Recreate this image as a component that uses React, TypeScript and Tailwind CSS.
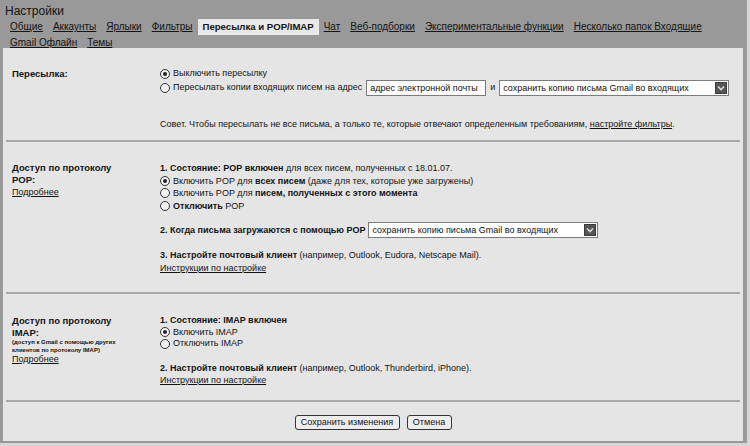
import { ReactNode } from "react"

const tabs = [
  "Общие",
  "Аккаунты",
  "Ярлыки",
  "Фильтры",
  "Пересылка и POP/IMAP",
  "Чат",
  "Веб-подборки",
  "Экспериментальные функции",
  "Несколько папок Входящие",
  "Gmail Офлайн",
  "Темы",
]

function Radio({ checked }: { checked?: boolean }) {
  return (
    <span className="inline-flex items-center justify-center w-[10px] h-[10px] rounded-full border border-[#333] bg-[#f2f2f2] mr-[3px] shrink-0">
      {checked && <span className="w-[4px] h-[4px] rounded-full bg-[#222]" />}
    </span>
  )
}

function Select({ className }: { className: string }) {
  return (
    <div className={`flex items-center h-[16px] bg-white border border-[#7c7c7c] pl-[3px] pr-[1px] ${className}`}>
      <span className="flex-1 text-[9px] leading-[14px]">сохранить копию письма Gmail во входящих</span>
      <span className="flex items-center justify-center w-[12px] h-[12px] bg-[#555] border border-[#3c3c3c]">
        <svg width="8" height="6" viewBox="0 0 8 6">
          <path d="M1 1.5 L4 4.5 L7 1.5" stroke="#d8d8d8" strokeWidth="1.6" fill="none" />
        </svg>
      </span>
    </div>
  )
}

function Line({ children, className = "" }: { children: ReactNode; className?: string }) {
  return <div className={`flex items-center ${className}`}>{children}</div>
}

function Divider() {
  return <div className="h-[2px] bg-[#a8a8a8] mx-[3px]" />
}

export default function App() {
  return (
    <div className="w-[750px] h-[446px] bg-[#d6d6d6] font-['Liberation_Sans',Arial,sans-serif] text-[#141414]">
      <div className="w-[747px] h-[443px] bg-[#999999] flex flex-col">
        <div className="text-[12px] leading-[16px] pl-[5px] pt-[3px]">Настройки</div>
        <div className="flex flex-wrap pl-[5px] pr-[30px] text-[10px]">
          {tabs.map((t) => {
            const active = t === "Пересылка и POP/IMAP"
            return (
              <span
                key={t}
                className={
                  active
                    ? "px-[5px] h-[16px] leading-[16px] bg-[#e8e8e8] font-bold text-[9.6px]"
                    : "px-[5px] h-[15px] leading-[16px] underline"
                }
              >
                {t}
              </span>
            )
          })}
        </div>
        <div className="flex-1 ml-[3px] w-[740px] mb-[2px] mt-[-2px] bg-[#e5e5e5] flex flex-col">
          {/* Пересылка */}
          <div className="grid grid-cols-[148px_1fr] pl-[9px] pt-[19px] pb-[9px]">
            <div className="text-[9.5px] leading-[13px] font-bold">Пересылка:</div>
            <div className="text-[9px]">
              <Line className="h-[13px]">
                <Radio checked />
                Выключить пересылку
              </Line>
              <Line className="h-[16px]">
                <Radio />
                Пересылать копии входящих писем на адрес
                <div className="ml-[4px] w-[120px] h-[16px] bg-white border border-[#7c7c7c] pl-[3px] leading-[14px]">
                  адрес электронной почты
                </div>
                <span className="mx-[4px]">и</span>
                <Select className="w-[230px]" />
              </Line>
              <div className="mt-[22px] leading-[13px]">
                Совет. Чтобы пересылать не все письма, а только те, которые отвечают определенным
                требованиям, <span className="underline">настройте фильтры</span>.
              </div>
            </div>
          </div>
          <Divider />

          {/* POP */}
          <div className="grid grid-cols-[148px_1fr] pl-[9px] pt-[20px] pb-[18px]">
            <div className="text-[9.5px] leading-[12px]">
              <div className="font-bold">Доступ по протоколу</div>
              <div className="font-bold">POP:</div>
              <div className="underline text-[9px]">Подробнее</div>
            </div>
            <div className="text-[9px] leading-[12.5px]">
              <div>
                <b>1. Состояние: POP включен</b> для всех писем, полученных с 18.01.07.
              </div>
              <Line>
                <Radio checked />
                <span>
                  Включить POP для <b>всех писем</b> (даже для тех, которые уже загружены)
                </span>
              </Line>
              <Line>
                <Radio />
                <span>
                  Включить POP для <b>писем, полученных с этого момента</b>
                </span>
              </Line>
              <Line>
                <Radio />
                <span>
                  <b>Отключить</b> POP
                </span>
              </Line>
              <Line className="mt-[10px]">
                <b className="mr-[3px]">2. Когда письма загружаются с помощью POP</b>
                <Select className="w-[230px]" />
              </Line>
              <div className="mt-[11px]">
                <b>3. Настройте почтовый клиент</b> (например, Outlook, Eudora, Netscape Mail).
              </div>
              <div className="underline">Инструкции по настройке</div>
            </div>
          </div>
          <Divider />

          {/* IMAP */}
          <div className="grid grid-cols-[148px_1fr] pl-[9px] pt-[21px] pb-[14px]">
            <div className="leading-[11.5px]">
              <div className="text-[9.5px] font-bold">Доступ по протоколу</div>
              <div className="text-[9.5px] font-bold">IMAP:</div>
              <div className="text-[6px] leading-[8px] font-bold">
                (доступ к Gmail с помощью других
                <br />
                клиентов по протоколу IMAP)
              </div>
              <div className="text-[9px] underline">Подробнее</div>
            </div>
            <div className="text-[9px] leading-[11.5px]">
              <div className="font-bold">1. Состояние: IMAP включен</div>
              <Line>
                <Radio checked />
                Включить IMAP
              </Line>
              <Line>
                <Radio />
                Отключить IMAP
              </Line>
              <div className="mt-[12px] leading-[12px]">
                <b>2. Настройте почтовый клиент</b> (например, Outlook, Thunderbird, iPhone).
              </div>
              <div className="underline leading-[12px]">Инструкции по настройке</div>
            </div>
          </div>
          <Divider />

          <div className="flex justify-center gap-[7px] mt-[13px] text-[9px]">
            <button className="w-[105px] h-[15px] leading-[13px] border border-[#333] rounded-[3px] bg-[#ededed]">
              Сохранить изменения
            </button>
            <button className="w-[45px] h-[15px] leading-[13px] border border-[#333] rounded-[3px] bg-[#ededed]">
              Отмена
            </button>
          </div>
        </div>
      </div>
    </div>
  )
}
